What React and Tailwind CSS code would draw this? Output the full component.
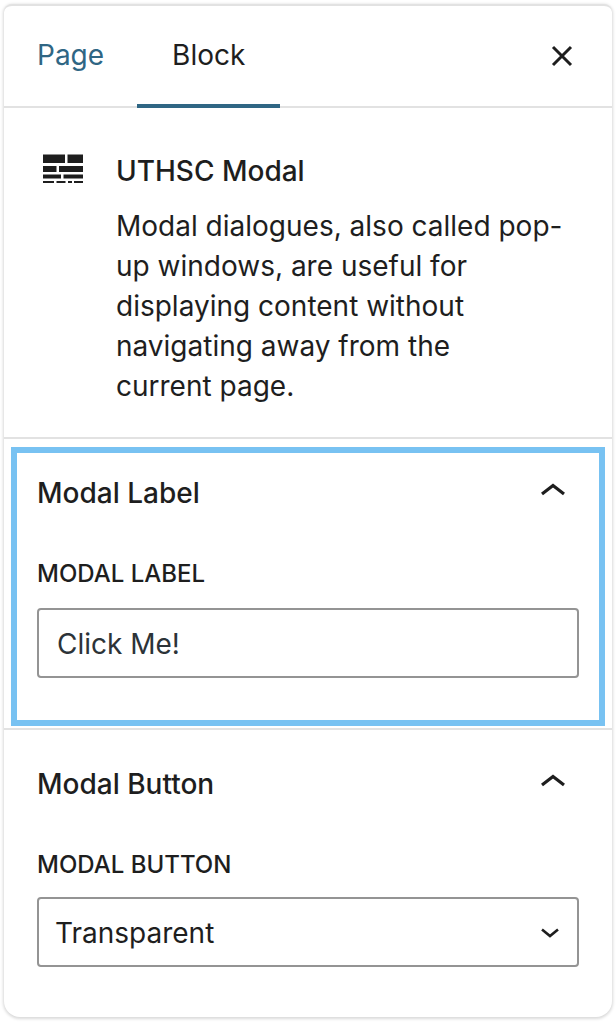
import React, { useState } from 'react'

function BlockIcon() {
  return (
    <svg viewBox="0 0 40 30" className="mt-[3px] w-10 h-[30px] shrink-0" fill="#1e1e1e" aria-hidden="true">
      <path d="M0 .5h22v8.500H0zM24.500 .5H40v8.500H24.500zM0 12h13.500v6H0zM16 12h24v6H16zM0 20.500h18v4H0zM20.500 20.500H40v4H20.500zM0 27h11v2H0zM13.500 27h9v2h-9zM25 27h4v2h-4zM31 27h9v2h-9z" />
    </svg>
  )
}

function PanelTitle({ children, open, onToggle }) {
  return (
    <h2>
      <button
        type="button"
        aria-expanded={open}
        onClick={onToggle}
        className="flex w-full items-center justify-between text-left text-[28px] leading-10 font-medium"
      >
        {children}
        <svg viewBox="0 0 52 40" className="w-[52px] h-10" fill="none" stroke="#1e1e1e" strokeWidth="3.2" aria-hidden="true">
          {open ? <path d="M15 21l11-8.500 11 8.500" /> : <path d="M15 13l11 8.500 11-8.500" />}
        </svg>
      </button>
    </h2>
  )
}

function App() {
  const [tab, setTab] = useState('block')
  const [labelOpen, setLabelOpen] = useState(true)
  const [buttonOpen, setButtonOpen] = useState(true)
  const [label, setLabel] = useState('Click Me!')
  const [style, setStyle] = useState('Transparent')

  const tabClass = (name) =>
    name === tab
      ? 'border-b-4 border-[#2f6684] px-[35px] text-[#1e1e1e]'
      : 'border-b-4 border-transparent px-[33px] text-[#2f6684]'

  return (
    <div className="px-1 pt-1 pb-[7px] bg-white font-['Inter','Liberation_Sans',sans-serif] text-[#1e1e1e]">
      <div className="rounded-t-lg rounded-b-2xl border-t-2 border-[#e2e2e2] bg-white shadow-[0_1px_3px_1px_rgba(0,0,0,0.15)]">
        <header className="flex h-[102px] items-stretch border-b-2 border-[#e2e2e2] text-[28px] leading-10">
          <div role="tablist" className="-mb-0.5 flex flex-1">
            <button type="button" role="tab" aria-selected={tab === 'page'} onClick={() => setTab('page')} className={tabClass('page')}>
              Page
            </button>
            <button type="button" role="tab" aria-selected={tab === 'block'} onClick={() => setTab('block')} className={tabClass('block')}>
              Block
            </button>
          </div>
          <button type="button" aria-label="Close" className="w-[100px] flex items-center justify-center">
            <svg viewBox="0 0 22 22" className="w-[22px] h-[22px]" fill="none" stroke="#1e1e1e" strokeWidth="3" aria-hidden="true">
              <path d="M2 2l18 18M20 2l-18 18" />
            </svg>
          </button>
        </header>

        <section className="flex items-start gap-[33px] border-b-2 border-[#e2e2e2] pt-[43px] pr-12 pb-[31px] pl-[39px]">
          <BlockIcon />
          <div className="text-[28px] leading-10">
            <h1 className="mb-[15px] font-medium">UTHSC Modal</h1>
            <p>
              Modal dialogues, also called pop-up windows, are useful for displaying content without navigating away from the
              <br />
              current page.
            </p>
          </div>
        </section>

        <section className="border-b-2 border-[#e2e2e2] px-[7px] pt-2 pb-0.5">
          <div className="border-6 border-[#78c2f2] px-5 pt-5 pb-[42px]">
            <PanelTitle open={labelOpen} onToggle={() => setLabelOpen(!labelOpen)}>Modal Label</PanelTitle>
            {labelOpen && (
              <div className="mt-[45px]">
                <label htmlFor="modal-label" className="block mb-[18px] text-2xl leading-8 font-medium uppercase">
                  Modal Label
                </label>
                <input
                  id="modal-label"
                  type="text"
                  value={label}
                  onChange={(e) => setLabel(e.target.value)}
                  className="block w-full h-[70px] rounded border-2 border-[#949494] px-[18px] pt-0.5 text-[28px] text-[#2c3338] focus:outline-none"
                />
              </div>
            )}
          </div>
        </section>

        <section className="px-[33px] pt-[34px] pb-[50px]">
          <PanelTitle open={buttonOpen} onToggle={() => setButtonOpen(!buttonOpen)}>Modal Button</PanelTitle>
          {buttonOpen && (
            <div className="mt-[45px]">
              <label htmlFor="modal-button" className="block mb-4 text-2xl leading-8 font-medium uppercase">
                Modal Button
              </label>
              <div className="relative">
                <select
                  id="modal-button"
                  value={style}
                  onChange={(e) => setStyle(e.target.value)}
                  className="block w-full h-[70px] appearance-none rounded border-2 border-[#949494] bg-white pl-4 pr-16 pt-0.5 text-[28px] focus:outline-none"
                >
                  <option>Transparent</option>
                </select>
                <svg viewBox="0 0 18 10" className="pointer-events-none absolute right-5 top-[31px] w-[18px] h-[10px]" fill="none" stroke="#1e1e1e" strokeWidth="2.600" aria-hidden="true">
                  <path d="M1 1.500l8 6.500 8-6.500" />
                </svg>
              </div>
            </div>
          )}
        </section>
      </div>
    </div>
  )
}

export default App
